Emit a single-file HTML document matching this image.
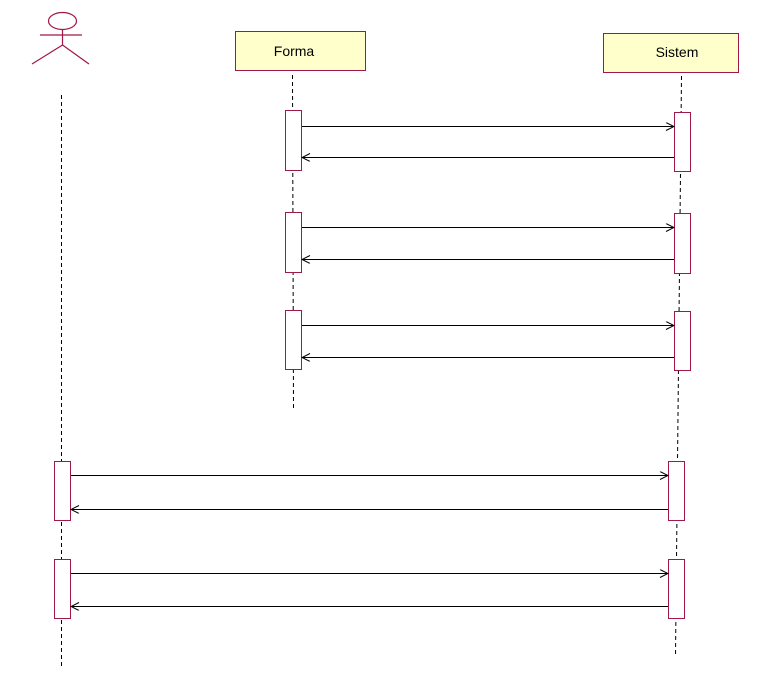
<!DOCTYPE html>
<html><head><meta charset="utf-8"><style>
html,body{margin:0;padding:0;background:#fff;width:770px;height:688px;overflow:hidden}
svg{display:block}
</style></head><body>
<svg width="770" height="688" xmlns="http://www.w3.org/2000/svg">
<defs>
<marker id="o" markerWidth="10" markerHeight="10" refX="9" refY="4" orient="auto" markerUnits="userSpaceOnUse">
<path d="M1,0 L9,4 L1,8" fill="none" stroke="#000" stroke-width="1"/>
</marker>
</defs>
<g stroke="#a0174a" fill="none" stroke-width="1.2">
<ellipse cx="62.5" cy="21" rx="14" ry="8.5"/>
<line x1="62.5" y1="29.5" x2="62.5" y2="45"/>
<line x1="40" y1="35" x2="82" y2="35"/>
<line x1="62.5" y1="45" x2="32" y2="64"/>
<line x1="62.5" y1="45" x2="89" y2="64"/>
</g>
<g stroke="#000" stroke-width="1" stroke-dasharray="4,3" fill="none">
<line x1="61.5" y1="95" x2="61.5" y2="668"/>
<line x1="292.5" y1="75" x2="293.5" y2="409"/>
<line x1="681.5" y1="76" x2="675.5" y2="657"/>
</g>
<rect x="235.5" y="31.5" width="130" height="39" fill="#ffffcc" stroke="#a0174a"/>
<text x="294" y="56" font-family="Liberation Sans, sans-serif" font-size="14" text-anchor="middle">Forma</text>
<rect x="603.5" y="33.5" width="135" height="39" fill="#ffffcc" stroke="#a0174a"/>
<text x="677" y="57" font-family="Liberation Sans, sans-serif" font-size="14" text-anchor="middle">Sistem</text>
<g fill="#fff" stroke="#a0174a" stroke-width="1">
<rect x="285.5" y="110.5" width="16" height="60"/>
<rect x="285.5" y="212.5" width="16" height="60"/>
<rect x="285.5" y="310.5" width="16" height="59"/>
<rect x="674.5" y="112.5" width="16" height="59"/>
<rect x="674.5" y="213.5" width="16" height="60"/>
<rect x="674.5" y="311.5" width="16" height="59"/>
<rect x="54.5" y="461.5" width="16" height="59"/>
<rect x="54.5" y="559.5" width="16" height="59"/>
<rect x="668.5" y="461.5" width="16" height="59"/>
<rect x="668.5" y="559.5" width="16" height="59"/>
</g>
<g stroke="#000" stroke-width="1" marker-end="url(#o)">
<line x1="302" y1="126.5" x2="674" y2="126.5"/>
<line x1="674" y1="157.5" x2="302" y2="157.5"/>
<line x1="302" y1="227.5" x2="674" y2="227.5"/>
<line x1="674" y1="259.5" x2="302" y2="259.5"/>
<line x1="302" y1="325.5" x2="674" y2="325.5"/>
<line x1="674" y1="357.5" x2="302" y2="357.5"/>
<line x1="71" y1="475.5" x2="668" y2="475.5"/>
<line x1="668" y1="509.5" x2="71" y2="509.5"/>
<line x1="71" y1="573.5" x2="668" y2="573.5"/>
<line x1="668" y1="606.5" x2="71" y2="606.5"/>
</g>
</svg>
</body></html>
